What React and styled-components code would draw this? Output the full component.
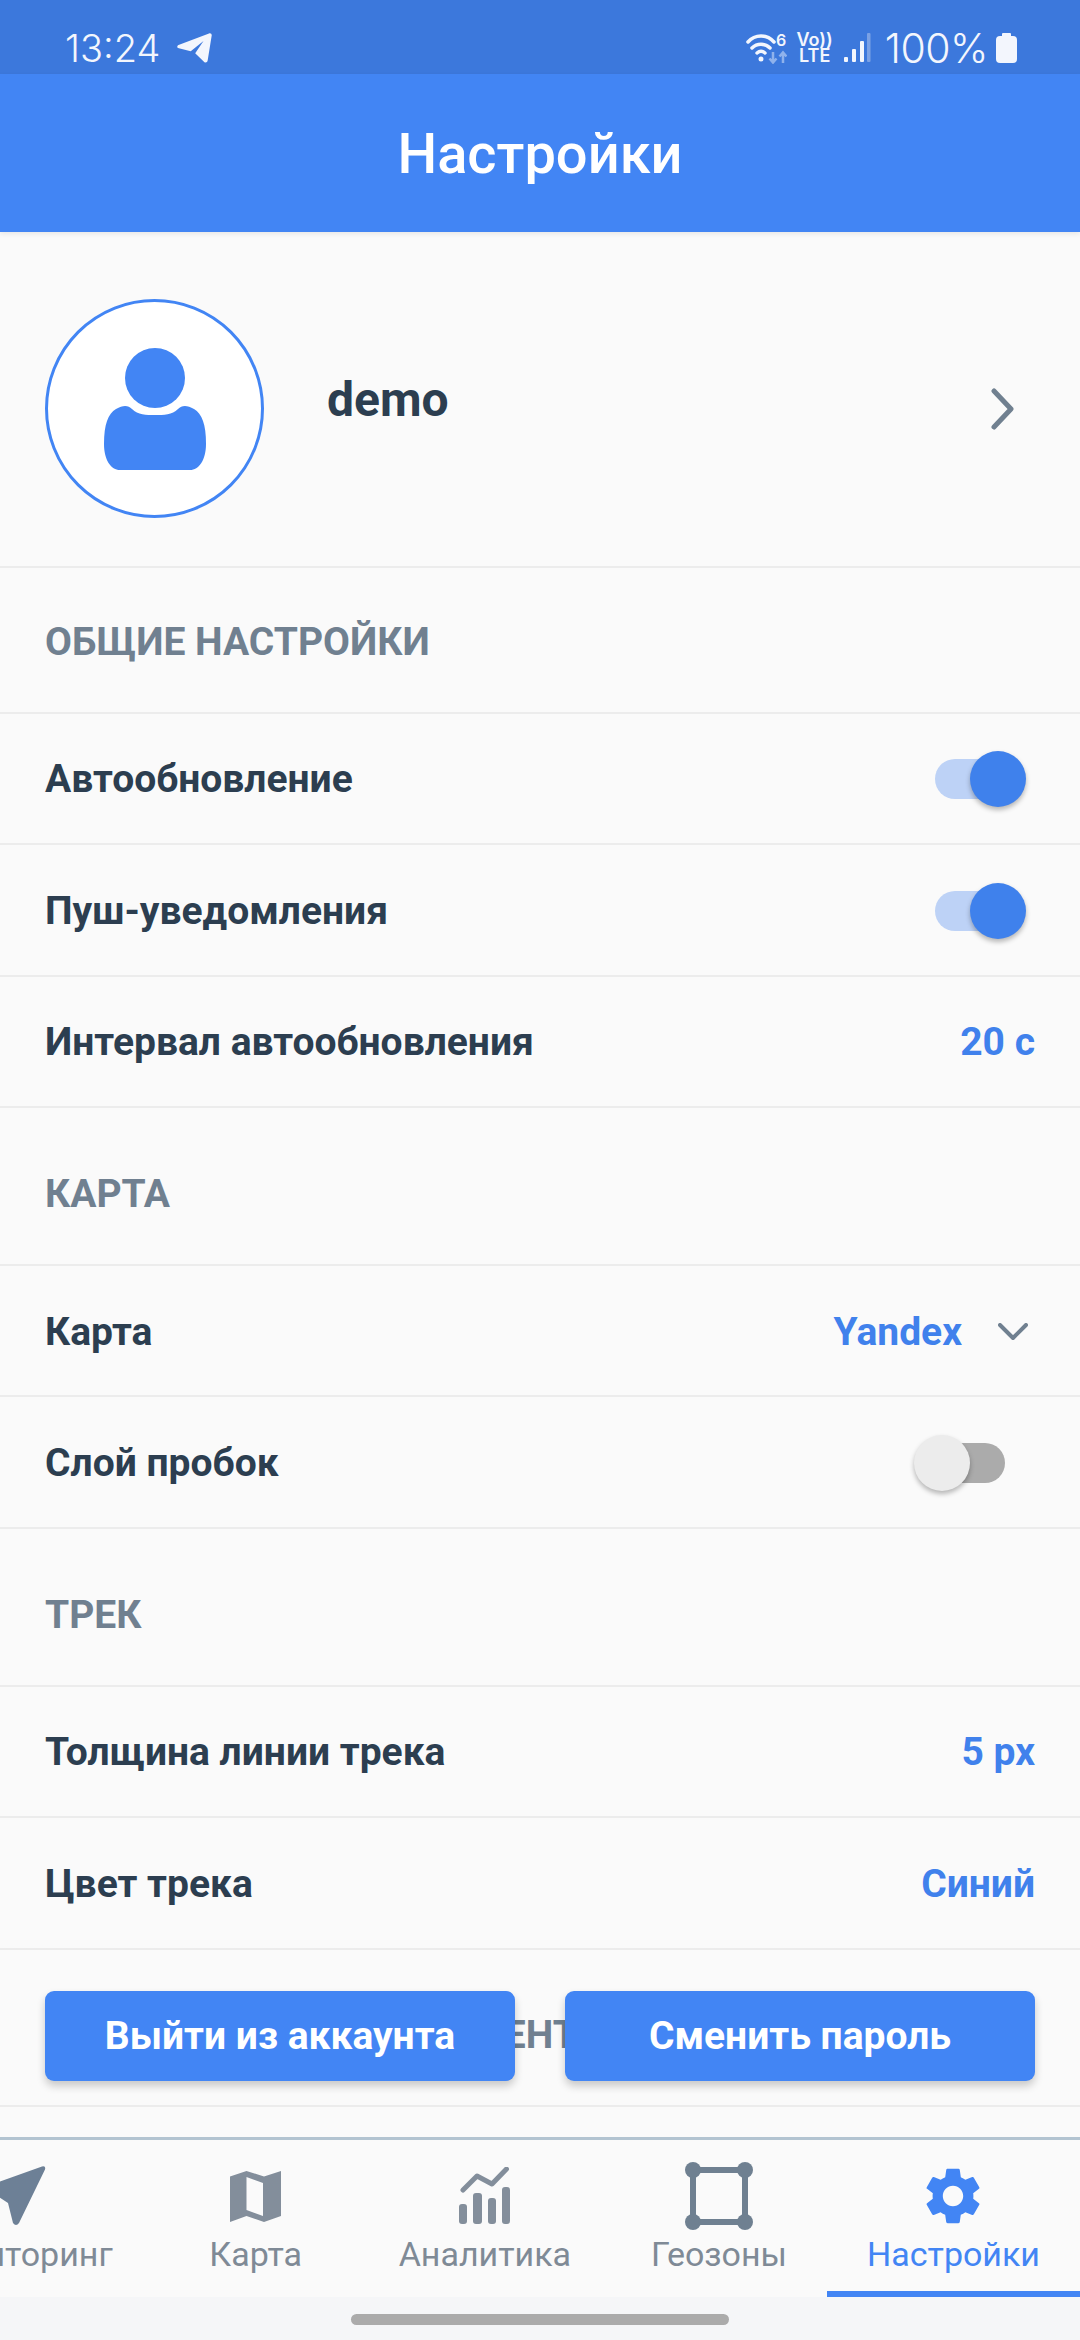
import React from "react";
import styled, { createGlobalStyle } from "styled-components";
import { MdSettings } from "react-icons/md";

const GlobalStyle = createGlobalStyle`
  html, body {
    margin: 0;
    padding: 0;
    background: #fafafa;
    overflow: hidden;
  }
  * {
    box-sizing: border-box;
  }
`;

const Screen = styled.div`
  width: 1080px;
  height: 2340px;
  display: flex;
  flex-direction: column;
  overflow: hidden;
  background: #fafafa;
  font-family: Roboto, "Liberation Sans", sans-serif;
`;

const StatusBar = styled.div`
  height: 74px;
  flex-shrink: 0;
  display: flex;
  align-items: center;
  justify-content: space-between;
  padding: 22px 63px 0 65px;
  background: #3c78dc;
  color: #f3f6fd;
  font-family: Inter, Roboto, sans-serif;
  font-size: 38px;
  font-weight: 300;
`;

const StatusGroup = styled.div`
  display: flex;
  align-items: center;
  gap: ${(p) => p.$gap}px;
`;

const NetworkText = styled.div`
  display: flex;
  flex-direction: column;
  align-items: center;
  font-size: 18px;
  font-weight: 600;
  line-height: 16px;
`;

const BatteryLevel = styled.span`
  margin: 0 -2px 0 4px;
  font-size: 41px;
  letter-spacing: -0.5px;
`;

const AppBar = styled.div`
  height: 158px;
  flex-shrink: 0;
  position: relative;
  z-index: 2;
  display: flex;
  align-items: center;
  justify-content: center;
  padding-top: 2px;
  background: #4285f4;
  color: #fff;
  font-size: 56px;
  font-weight: 500;
  box-shadow: 0 2px 5px rgba(0, 0, 0, 0.08);
`;

const Content = styled.div`
  height: 1905px;
  flex-shrink: 0;
  position: relative;
  overflow: hidden;
`;

const Profile = styled.div`
  height: 335.5px;
  display: flex;
  align-items: center;
  padding: 20px 65px 0 45px;
  border-bottom: 2px solid #ececec;
`;

const Avatar = styled.div`
  width: 219px;
  height: 219px;
  flex-shrink: 0;
  display: flex;
  align-items: center;
  justify-content: center;
  border-radius: 50%;
  border: 3px solid #4285f4;
  background: #fff;
`;

const ProfileName = styled.div`
  flex: 1;
  padding: 0 0 18px 63px;
  color: #2c3e50;
  font-size: 48px;
  font-weight: 700;
`;

const SectionHeader = styled.div`
  height: ${(p) => (p.$first ? 146 : 157.6)}px;
  display: flex;
  align-items: flex-end;
  padding: 0 45px 47px;
  border-bottom: 2px solid #ececec;
  color: #708090;
  font-size: 39px;
  line-height: 46px;
  font-weight: 700;
`;

const Row = styled.div`
  height: 131.6px;
  display: flex;
  align-items: center;
  justify-content: space-between;
  padding: 2px 45px 0;
  border-bottom: 2px solid #ececec;
`;

const RowLabel = styled.div`
  color: #2c3e50;
  font-size: 39px;
  font-weight: 700;
`;

const RowValue = styled.div`
  display: flex;
  align-items: center;
  gap: 36px;
  padding-right: ${(p) => p.$inset || 0}px;
  color: #4081ec;
  font-size: 39px;
  font-weight: 700;
`;

const Track = styled.div`
  position: relative;
  width: 82px;
  height: 40px;
  margin-right: ${(p) => (p.$on ? 18 : 30)}px;
  border-radius: 20px;
  background: ${(p) => (p.$on ? "#bdd2f6" : "#ababab")};
`;

const Thumb = styled.div`
  position: absolute;
  top: -8px;
  left: ${(p) => (p.$on ? 35 : -9)}px;
  width: 56px;
  height: 56px;
  border-radius: 50%;
  background: ${(p) => (p.$on ? "#3f81ec" : "#ececec")};
  box-shadow: 0 3px 5px rgba(0, 0, 0, 0.28);
`;

const Actions = styled.div`
  position: absolute;
  left: 45px;
  right: 45px;
  top: 1759px;
  display: flex;
  justify-content: space-between;
`;

const ActionButton = styled.div`
  width: 470px;
  height: 90px;
  display: flex;
  align-items: center;
  justify-content: center;
  border-radius: 9px;
  background: #4285f4;
  color: #fff;
  font-size: 39px;
  font-weight: 700;
  box-shadow: 0 5px 8px rgba(0, 0, 0, 0.2);
`;

const TabBar = styled.div`
  height: 160px;
  flex-shrink: 0;
  display: flex;
  justify-content: flex-end;
  overflow: hidden;
  border-top: 3px solid #b3c4d1;
  background: #fafafa;
`;

const Tab = styled.div`
  flex-shrink: 0;
  min-width: ${(p) => p.$min || 0}px;
  height: 157px;
  display: flex;
  flex-direction: column;
  align-items: center;
  padding: 19px 40px 0;
  border-bottom: ${(p) => (p.$active ? "6px solid #4285f4" : "none")};
  color: ${(p) => (p.$active ? "#4285f4" : "#7f8a96")};
  font-size: 34px;
`;

const TabIcon = styled.div`
  height: 74px;
  display: flex;
  align-items: center;
  justify-content: center;
  margin-bottom: 1px;
  color: ${(p) => p.$color};
`;

const NavBar = styled.div`
  height: 43px;
  flex-shrink: 0;
  display: flex;
  justify-content: center;
  padding-top: 17px;
  background: #f5f6f8;
`;

const HomePill = styled.div`
  width: 378px;
  height: 11px;
  border-radius: 6px;
  background: #ababab;
`;

const TelegramIcon = () => (
  <svg width="36" height="30" viewBox="0 0 36 30">
    <path
      fill="#f3f6fd"
      d="M1.2 12.4 33 .4c1.6-.6 3 .5 2.7 2.2l-4 24.6c-.3 2-2 2.900-3.500 1.700l-9-8.600 8.300-12.300-12.800 10.300-11.800-3c-2-.6-2.200-2.200-.7-2.900z"
    />
  </svg>
);

const WifiIcon = () => (
  <svg width="41" height="32" viewBox="0 0 41 32" fill="none">
    <path d="M2 10C9 2 21 2 28 10" stroke="#f3f6fd" strokeWidth="3.5" strokeLinecap="round" />
    <path d="M6 16c5-5 13-5 18 0" stroke="#f3f6fd" strokeWidth="3.5" strokeLinecap="round" />
    <path d="M11 21c3-2.500 5-2.500 8 0" stroke="#f3f6fd" strokeWidth="3.5" strokeLinecap="round" />
    <circle cx="15" cy="27" r="2.500" fill="#f3f6fd" />
    <path d="M27 20v10M23.500 26.500l3.500 4 3.500-4" stroke="#8fb2ec" strokeWidth="2.500" />
    <path d="M37 31V21M33.500 24.500l3.500-4 3.500 4" stroke="#8fb2ec" strokeWidth="2.500" />
    <text x="30" y="14" fill="#f3f6fd" fontSize="16" fontWeight="600">6</text>
  </svg>
);

const SignalIcon = () => (
  <svg width="28" height="30" viewBox="0 0 28 30">
    <rect x="1" y="24" width="4" height="5" rx="1" fill="#f3f6fd" />
    <rect x="9" y="16" width="4" height="13" rx="1" fill="#f3f6fd" />
    <rect x="17" y="8" width="4" height="21" rx="1" fill="#f3f6fd" />
    <rect x="24" y="0" width="3.500" height="29" rx="1" fill="#7ba1e4" />
  </svg>
);

const BatteryIcon = () => (
  <svg width="21" height="30" viewBox="0 0 21 30">
    <rect x="6" y="0" width="9" height="4" rx="1" fill="#f3f6fd" />
    <rect x="0" y="3" width="21" height="27" rx="4" fill="#f3f6fd" />
  </svg>
);

const PersonIcon = () => (
  <svg width="102" height="122" viewBox="0 0 102 122">
    <ellipse cx="51" cy="30" rx="30" ry="30" fill="#4285f4" />
    <path
      fill="#4285f4"
      d="M0 96C0 76 4 66 12 61c7-4 12-4 16 0 6 6 14 6 23 6s17 0 23-6c4-4 9-4 16 0 8 5 12 15 12 35 0 16-7 26-16 26H16C7 122 0 112 0 96z"
    />
  </svg>
);

const ChevronRight = () => (
  <svg width="24" height="42" viewBox="0 0 24 42" fill="none">
    <path d="M3 3l17 18L3 39" stroke="#708090" strokeWidth="5" strokeLinecap="round" strokeLinejoin="round" />
  </svg>
);

const ChevronDown = () => (
  <svg width="30" height="18" viewBox="0 0 30 18" fill="none">
    <path d="M2 2l13 13L28 2" stroke="#708090" strokeWidth="4" strokeLinecap="round" strokeLinejoin="round" />
  </svg>
);

const NavigationIcon = () => (
  <svg width="62" height="60" viewBox="0 0 62 60">
    <path
      fill="#6d8096"
      d="M58 .5 3 20q-3 1.500 0 3.500L24 37l5 20q3 4 6 0L61 3.500Q62-.5 58 .5z"
    />
  </svg>
);

const MapIcon = () => (
  <svg width="51" height="51" viewBox="0 0 51 51">
    <path
      fill="#838e9b"
      fillRule="evenodd"
      d="M0 5.500 16.500 0 34 5.500 51 0v45l-17 6-17.500-6L0 51zM16.500 6v33L33 45V12z"
    />
  </svg>
);

const AnalyticsIcon = () => (
  <svg width="52" height="58" viewBox="0 0 52 58">
    <path d="M4 23l14-14 15 8L47.500 2" fill="none" stroke="#838e9b" strokeWidth="5" strokeLinecap="round" strokeLinejoin="round" />
    <rect x="0" y="37" width="8" height="20" rx="3" fill="#838e9b" />
    <rect x="14" y="26" width="9" height="31" rx="3" fill="#838e9b" />
    <rect x="29" y="31" width="8" height="26" rx="3" fill="#838e9b" />
    <rect x="43" y="20" width="8" height="37" rx="3" fill="#838e9b" />
  </svg>
);

const GeozoneIcon = () => (
  <svg width="68" height="68" viewBox="0 0 68 68">
    <rect x="8" y="8" width="52" height="52" fill="none" stroke="#6f8091" strokeWidth="6" />
    <circle cx="8" cy="8" r="8" fill="#6f8091" />
    <circle cx="60" cy="8" r="8" fill="#6f8091" />
    <circle cx="8" cy="60" r="8" fill="#6f8091" />
    <circle cx="60" cy="60" r="8" fill="#6f8091" />
  </svg>
);

const Switch = ({ on }) => (
  <Track $on={on}>
    <Thumb $on={on} />
  </Track>
);

const SettingRow = ({ label, children }) => (
  <Row>
    <RowLabel>{label}</RowLabel>
    {children}
  </Row>
);

const App = () => {
  return (
    <Screen>
      <GlobalStyle />
      <StatusBar>
        <StatusGroup $gap={16}>
          13:24
          <TelegramIcon />
        </StatusGroup>
        <StatusGroup $gap={10}>
          <WifiIcon />
          <NetworkText>
            <span>Vo))</span>
            <span>LTE</span>
          </NetworkText>
          <SignalIcon />
          <BatteryLevel>100%</BatteryLevel>
          <BatteryIcon />
        </StatusGroup>
      </StatusBar>
      <AppBar>Настройки</AppBar>
      <Content>
        <Profile>
          <Avatar>
            <PersonIcon />
          </Avatar>
          <ProfileName>demo</ProfileName>
          <ChevronRight />
        </Profile>
        <SectionHeader $first>ОБЩИЕ НАСТРОЙКИ</SectionHeader>
        <SettingRow label="Автообновление">
          <Switch on />
        </SettingRow>
        <SettingRow label="Пуш-уведомления">
          <Switch on />
        </SettingRow>
        <SettingRow label="Интервал автообновления">
          <RowValue>20 с</RowValue>
        </SettingRow>
        <SectionHeader>КАРТА</SectionHeader>
        <SettingRow label="Карта">
          <RowValue $inset={7}>
            Yandex
            <ChevronDown />
          </RowValue>
        </SettingRow>
        <SettingRow label="Слой пробок">
          <Switch />
        </SettingRow>
        <SectionHeader>ТРЕК</SectionHeader>
        <SettingRow label="Толщина линии трека">
          <RowValue>5 px</RowValue>
        </SettingRow>
        <SettingRow label="Цвет трека">
          <RowValue>Синий</RowValue>
        </SettingRow>
        <SectionHeader>ИНФОРМАЦИЯ ДЛЯ КЛИЕНТОВ</SectionHeader>
        <Actions>
          <ActionButton>Выйти из аккаунта</ActionButton>
          <ActionButton>Сменить пароль</ActionButton>
        </Actions>
      </Content>
      <TabBar>
        <Tab>
          <TabIcon>
            <NavigationIcon />
          </TabIcon>
          Мониторинг
        </Tab>
        <Tab $min={206}>
          <TabIcon>
            <MapIcon />
          </TabIcon>
          Карта
        </Tab>
        <Tab>
          <TabIcon>
            <AnalyticsIcon />
          </TabIcon>
          Аналитика
        </Tab>
        <Tab>
          <TabIcon>
            <GeozoneIcon />
          </TabIcon>
          Геозоны
        </Tab>
        <Tab $active>
          <TabIcon $color="#4285f4">
            <MdSettings size={68} />
          </TabIcon>
          Настройки
        </Tab>
      </TabBar>
      <NavBar>
        <HomePill />
      </NavBar>
    </Screen>
  );
};

export default App;
